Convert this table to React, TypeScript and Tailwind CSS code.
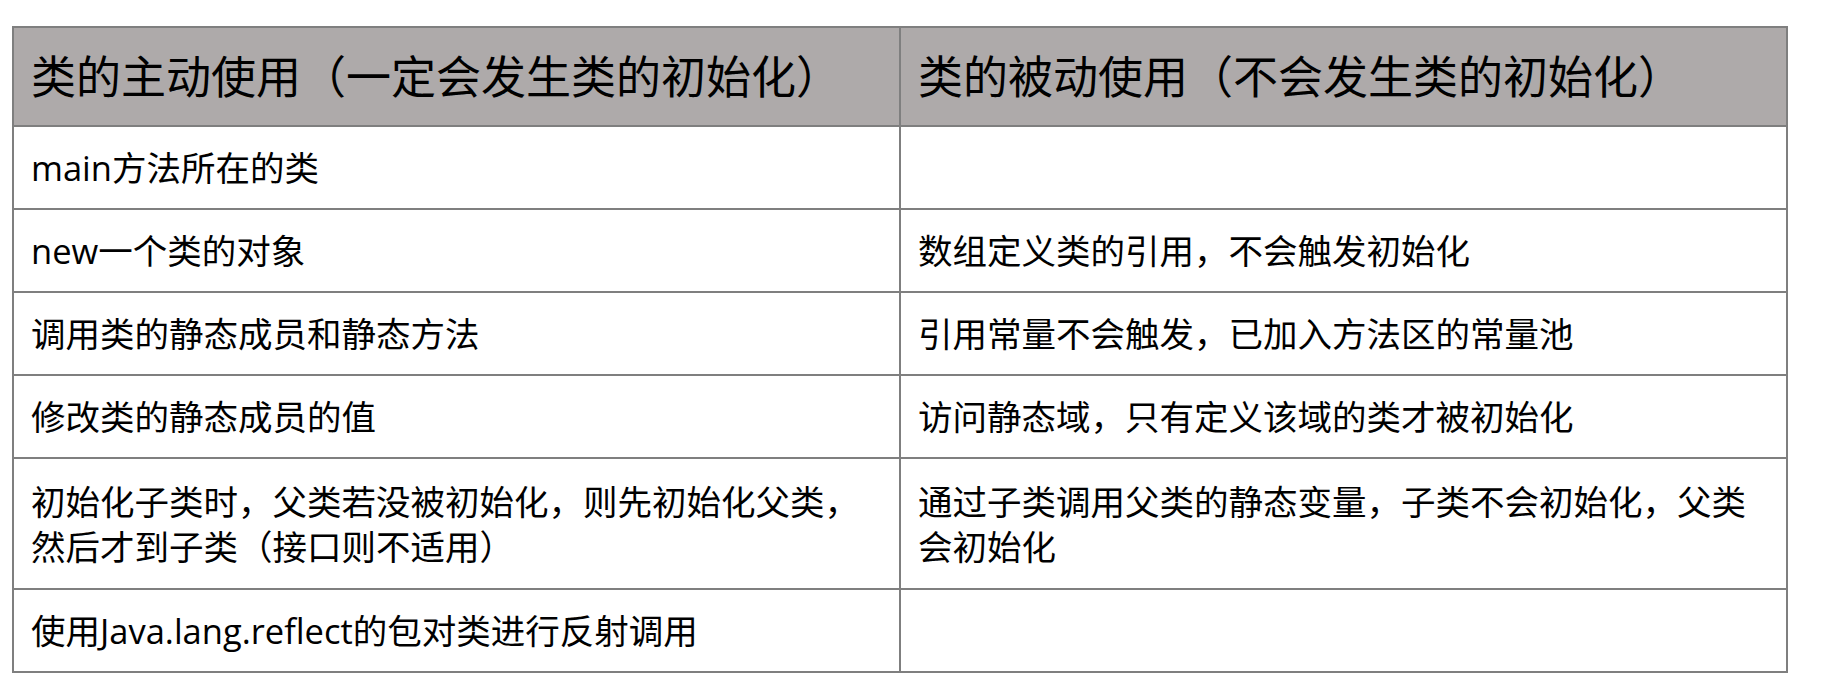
import React from "react";

const rows: [string, string][] = [
  ["main方法所在的类", ""],
  ["new一个类的对象", "数组定义类的引用，不会触发初始化"],
  ["调用类的静态成员和静态方法", "引用常量不会触发，已加入方法区的常量池"],
  ["修改类的静态成员的值", "访问静态域，只有定义该域的类才被初始化"],
  [
    "初始化子类时，父类若没被初始化，则先初始化父类，然后才到子类（接口则不适用）",
    "通过子类调用父类的静态变量，子类不会初始化，父类会初始化",
  ],
  ["使用Java.lang.reflect的包对类进行反射调用", ""],
];

export default function App() {
  return (
    <div
      className="w-[1824px] h-[696px] bg-white pt-[26px] pl-[12px]"
      style={{ fontFamily: '"Open Sans", "Noto Sans CJK SC", sans-serif' }}
    >
      <table className="w-[1776px] table-fixed border-collapse text-black">
        <colgroup>
          <col className="w-1/2" />
          <col className="w-1/2" />
        </colgroup>
        <thead>
          <tr className="h-[99px] bg-[#aeaaaa]">
            <th className="border-2 border-[#7f7f7f] px-[17px] text-left font-normal text-[45px] leading-[1.2]">
              类的主动使用（一定会发生类的初始化）
            </th>
            <th className="border-2 border-[#7f7f7f] px-[17px] text-left font-normal text-[45px] leading-[1.2]">
              类的被动使用（不会发生类的初始化）
            </th>
          </tr>
        </thead>
        <tbody>
          {rows.map(([a, b], i) => (
            <tr key={i} className={i === 4 ? "h-[131px]" : "h-[83px]"}>
              <td className="border-2 border-[#7f7f7f] px-[17px] align-middle text-[34.5px] leading-[45px]">
                {a}
              </td>
              <td className="border-2 border-[#7f7f7f] px-[17px] align-middle text-[34.5px] leading-[45px]">
                {b}
              </td>
            </tr>
          ))}
        </tbody>
      </table>
    </div>
  );
}
